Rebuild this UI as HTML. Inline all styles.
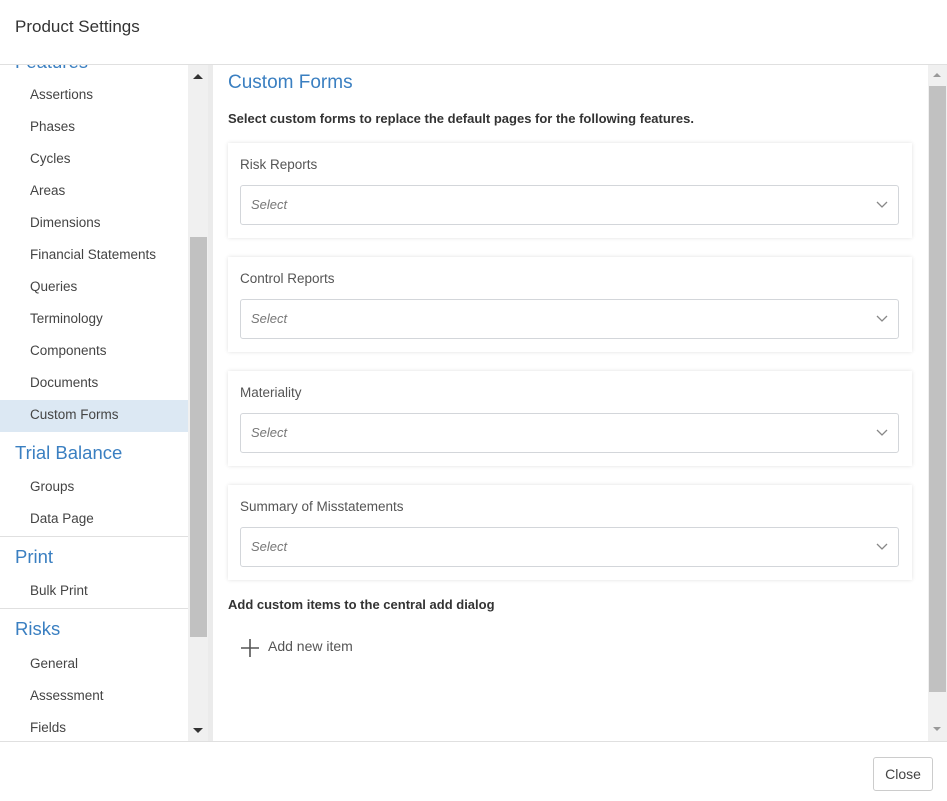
<!DOCTYPE html><html><head><style>
body{margin:0;width:947px;height:801px;position:relative;font-family:"Liberation Sans",sans-serif;background:#fff;overflow:hidden;color:#333}
.a{position:absolute}
.hdr{left:15px;top:17px;font-size:17px;color:#333}
.nav{left:0;top:65px;width:188px;height:676px;overflow:hidden}
.it{position:absolute;left:30px;font-size:13.5px;color:#444}
.h{position:absolute;left:15px;font-size:18.5px;color:#3a7fc1}
.card{position:absolute;left:228px;width:684px;height:95px;background:#fff;box-shadow:0 0 4px rgba(0,0,0,.12)}
.card .l{position:absolute;left:12px;top:14px;font-size:13.5px;color:#555}
.card .s{position:absolute;left:12px;top:42px;width:657px;height:38px;border:1px solid #d3d6da;border-radius:3px}
.card .s span{position:absolute;left:10px;top:11px;font-size:13px;font-style:italic;color:#777}
.card .s svg{position:absolute;right:10px;top:15px}
</style></head><body>
<div class="a hdr">Product Settings</div>
<div class="a" style="left:0;top:64px;width:947px;height:1px;background:#e0e0e0"></div>
<div class="a nav">
<div class="h" style="top:-14px">Features</div>
<div class="it" style="top:22px">Assertions</div>
<div class="it" style="top:54px">Phases</div>
<div class="it" style="top:86px">Cycles</div>
<div class="it" style="top:118px">Areas</div>
<div class="it" style="top:150px">Dimensions</div>
<div class="it" style="top:182px">Financial Statements</div>
<div class="it" style="top:214px">Queries</div>
<div class="it" style="top:246px">Terminology</div>
<div class="it" style="top:278px">Components</div>
<div class="it" style="top:310px">Documents</div>
<div class="a" style="left:0;top:335px;width:188px;height:32px;background:#dce8f3"></div>
<div class="it" style="top:342px">Custom Forms</div>
<div class="h" style="top:377px">Trial Balance</div>
<div class="it" style="top:414px">Groups</div>
<div class="it" style="top:446px">Data Page</div>
<div class="a" style="left:0;top:471px;width:188px;height:1px;background:#e0e0e0"></div>
<div class="h" style="top:481px">Print</div>
<div class="it" style="top:518px">Bulk Print</div>
<div class="a" style="left:0;top:543px;width:188px;height:1px;background:#e0e0e0"></div>
<div class="h" style="top:553px">Risks</div>
<div class="it" style="top:591px">General</div>
<div class="it" style="top:623px">Assessment</div>
<div class="it" style="top:655px">Fields</div>
</div>
<div class="a" style="left:188px;top:65px;width:20px;height:676px;background:#f0f0f0"></div>
<div class="a" style="left:190px;top:237px;width:17px;height:400px;background:#c1c1c1"></div>
<div class="a" style="left:193px;top:74px;width:0;height:0;border:5px solid transparent;border-bottom-color:#333;border-top:0"></div>
<div class="a" style="left:193px;top:728px;width:0;height:0;border:5px solid transparent;border-top-color:#333;border-bottom:0"></div>
<div class="a" style="left:208px;top:65px;width:5px;height:676px;background:#ebebeb"></div>
<div class="a" style="left:928px;top:65px;width:19px;height:676px;background:#f0f0f0"></div>
<div class="a" style="left:929px;top:86px;width:17px;height:606px;background:#c1c1c1"></div>
<div class="a" style="left:933px;top:73px;width:0;height:0;border:4px solid transparent;border-bottom-color:#999;border-top:0"></div>
<div class="a" style="left:933px;top:727px;width:0;height:0;border:4px solid transparent;border-top-color:#999;border-bottom:0"></div>
<div class="a" style="left:228px;top:72px;font-size:19px;color:#3a7fc1">Custom Forms</div>
<div class="a" style="left:228px;top:111px;font-size:13px;font-weight:bold;color:#333">Select custom forms to replace the default pages for the following features.</div>
<div class="card" style="top:143px"><div class="l">Risk Reports</div><div class="s"><span>Select</span><svg width="12" height="8"><path d="M1 1l5 5 5-5" fill="none" stroke="#888" stroke-width="1.3"/></svg></div></div>
<div class="card" style="top:257px"><div class="l">Control Reports</div><div class="s"><span>Select</span><svg width="12" height="8"><path d="M1 1l5 5 5-5" fill="none" stroke="#888" stroke-width="1.3"/></svg></div></div>
<div class="card" style="top:371px"><div class="l">Materiality</div><div class="s"><span>Select</span><svg width="12" height="8"><path d="M1 1l5 5 5-5" fill="none" stroke="#888" stroke-width="1.3"/></svg></div></div>
<div class="card" style="top:485px"><div class="l">Summary of Misstatements</div><div class="s"><span>Select</span><svg width="12" height="8"><path d="M1 1l5 5 5-5" fill="none" stroke="#888" stroke-width="1.3"/></svg></div></div>
<div class="a" style="left:228px;top:597px;font-size:13px;font-weight:bold;color:#333">Add custom items to the central add dialog</div>
<svg class="a" style="left:240px;top:638px" width="20" height="20"><path d="M10 1v18M1 10h18" stroke="#555" stroke-width="1.6"/></svg>
<div class="a" style="left:268px;top:638px;font-size:14px;color:#555">Add new item</div>
<div class="a" style="left:0;top:741px;width:947px;height:1px;background:#e0e0e0"></div>
<div class="a" style="left:873px;top:757px;width:58px;height:32px;border:1px solid #ccc;border-radius:3px;font-size:14px;color:#444;text-align:center;line-height:32px">Close</div>
</body></html>
